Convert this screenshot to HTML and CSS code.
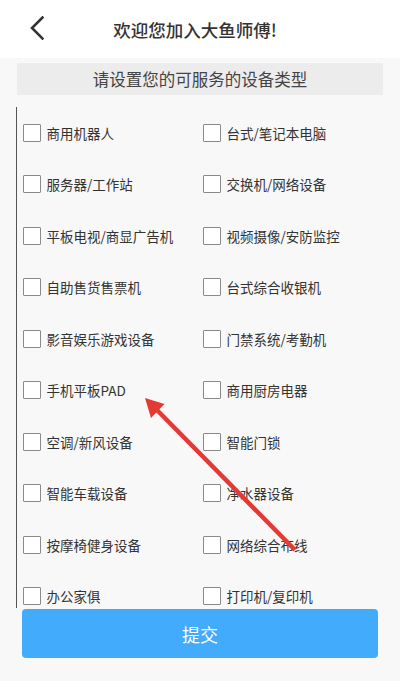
FILE: index.html
```html
<!DOCTYPE html>
<html lang="zh">
<head>
<meta charset="utf-8">
<link rel="stylesheet" href="styles.css">
</head>
<body>
<div class="page">
  <header class="topbar">
    <svg class="back" width="14" height="24" viewBox="0 0 14 24"><path d="M12.5 1.5 L2 12 L12.5 22.5" fill="none" stroke="#333" stroke-width="2.6" stroke-linecap="square"/></svg>
    <h1 class="title">欢迎您加入大鱼师傅!</h1>
  </header>
  <div class="subtitle">请设置您的可服务的设备类型</div>
  <div class="list">
    <div class="grid">
      <label class="item"><span class="box"></span>商用机器人</label>
      <label class="item"><span class="box"></span>台式/笔记本电脑</label>
      <label class="item"><span class="box"></span>服务器/工作站</label>
      <label class="item"><span class="box"></span>交换机/网络设备</label>
      <label class="item"><span class="box"></span>平板电视/商显广告机</label>
      <label class="item"><span class="box"></span>视频摄像/安防监控</label>
      <label class="item"><span class="box"></span>自助售货售票机</label>
      <label class="item"><span class="box"></span>台式综合收银机</label>
      <label class="item"><span class="box"></span>影音娱乐游戏设备</label>
      <label class="item"><span class="box"></span>门禁系统/考勤机</label>
      <label class="item"><span class="box"></span>手机平板PAD</label>
      <label class="item"><span class="box"></span>商用厨房电器</label>
      <label class="item"><span class="box"></span>空调/新风设备</label>
      <label class="item"><span class="box"></span>智能门锁</label>
      <label class="item"><span class="box"></span>智能车载设备</label>
      <label class="item"><span class="box"></span>净水器设备</label>
      <label class="item"><span class="box"></span>按摩椅健身设备</label>
      <label class="item"><span class="box"></span>网络综合布线</label>
      <label class="item"><span class="box"></span>办公家俱</label>
      <label class="item"><span class="box"></span>打印机/复印机</label>
    </div>
  </div>
  <button class="submit">提交</button>
  <svg class="arrow" width="400" height="681" viewBox="0 0 400 681">
    <line x1="295" y1="550" x2="154" y2="407" stroke="#e53935" stroke-width="4.5"/>
    <polygon points="145,398 164.5,404 151,418" fill="#e53935"/>
  </svg>
</div>
</body>
</html>
```
FILE: styles.css
```css
* { box-sizing: border-box; }
html, body { margin: 0; padding: 0; }
body {
  width: 400px;
  height: 681px;
  background: #f8f8f8;
  font-family: "Noto Sans CJK SC", "Noto Sans", sans-serif;
  color: #333;
  overflow: hidden;
}
.page { position: relative; width: 400px; height: 681px; }
.topbar {
  height: 58px;
  background: #fff;
  display: flex;
  align-items: center;
  justify-content: center;
  padding-right: 10px;
}
.back {
  position: absolute;
  left: 30px;
  top: 16px;
}
.title {
  margin: 0;
  font-size: 17.5px;
  font-weight: 500;
  color: #333;
}
.subtitle {
  margin: 5px 17px 0;
  height: 32px;
  background: #ececec;
  display: flex;
  align-items: center;
  justify-content: center;
  font-size: 16.5px;
  color: #444;
}
.list {
  margin: 12px 0 0 16px;
  height: 501px;
  overflow: hidden;
  border-left: 1.5px solid #555;
}
.grid {
  display: grid;
  grid-template-columns: 180px 180px;
  grid-auto-rows: 51.5px;
  padding-left: 5.5px;
}
.item {
  display: flex;
  align-items: center;
  gap: 6px;
  font-size: 13.5px;
  color: #333;
}
.box {
  width: 18px;
  height: 18px;
  border: 1.5px solid #8a8a8a;
  border-radius: 1px;
  background: #fff;
  flex: none;
}
.submit {
  display: block;
  margin: 1px 22px 0;
  width: 356px;
  height: 49px;
  border: none;
  border-radius: 4px;
  background: #42abfc;
  color: #fff;
  font-family: "Noto Sans CJK SC", sans-serif;
  font-size: 18px;
}
.arrow {
  position: absolute;
  left: 0;
  top: 0;
  pointer-events: none;
}
```
